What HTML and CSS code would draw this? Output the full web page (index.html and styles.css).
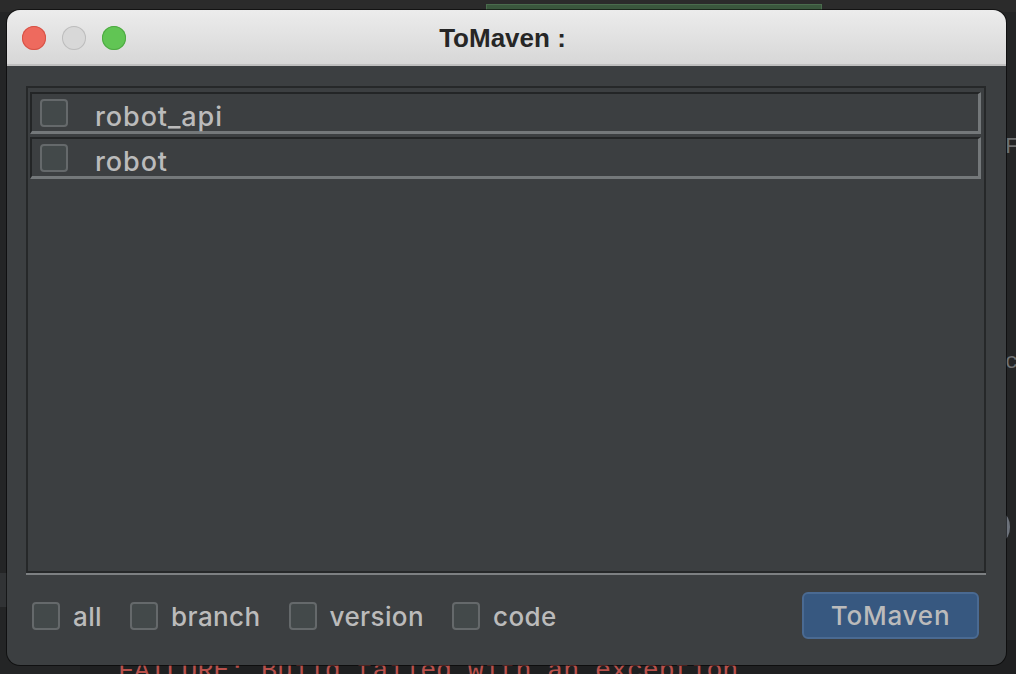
FILE: index.html
```html
<!DOCTYPE html>
<html>
<head>
<meta charset="utf-8">
<title>ToMaven</title>
<link rel="stylesheet" href="styles.css">
</head>
<body>
<div class="desktop">
  <div class="ide-topband"></div>
  <div class="ide-progress"></div>
  <div class="ide-leftband"></div>
  <div class="ide-console"><span class="console-text">FAILURE: Build failed with an exception.</span></div>
  <div class="ide-glyph glyph-f">F</div>
  <div class="ide-glyph glyph-c">c</div>
  <div class="ide-knob"></div>

  <div class="window">
    <div class="titlebar">
      <div class="lights">
        <span class="light red"></span>
        <span class="light gray"></span>
        <span class="light green"></span>
      </div>
      <div class="title">ToMaven :</div>
    </div>
    <div class="content">
      <div class="list">
        <div class="row">
          <span class="box"></span>
          <span class="row-label">robot_api</span>
        </div>
        <div class="row">
          <span class="box"></span>
          <span class="row-label">robot</span>
        </div>
      </div>
      <div class="footer">
        <div class="opts">
          <label class="opt"><span class="box"></span><span class="opt-label">all</span></label>
          <label class="opt"><span class="box"></span><span class="opt-label">branch</span></label>
          <label class="opt"><span class="box"></span><span class="opt-label">version</span></label>
          <label class="opt"><span class="box"></span><span class="opt-label">code</span></label>
        </div>
        <button class="btn">ToMaven</button>
      </div>
    </div>
  </div>
</div>
</body>
</html>
```

FILE: styles.css
```css
* { box-sizing: border-box; }
html, body {
  margin: 0;
  padding: 0;
  width: 1016px;
  height: 674px;
  overflow: hidden;
  background: #2b2b2b;
  font-family: Inter, "Liberation Sans", sans-serif;
}
.desktop {
  position: relative;
  width: 1016px;
  height: 674px;
  background: #242526;
}
.ide-topband {
  position: absolute;
  left: 0; top: 0;
  width: 1016px; height: 12px;
  background: #2b2b2b;
}
.ide-progress {
  position: absolute;
  left: 486px; top: 4px;
  width: 336px; height: 8px;
  background: #3a573d;
  border: 1px solid #4a6c4d;
}
.ide-leftband {
  position: absolute;
  left: 0; top: 573px;
  width: 10px; height: 34px;
  background: #313335;
}
.ide-console {
  position: absolute;
  left: 80px; top: 640px;
  width: 936px; height: 34px;
  background: #1f2021;
}
.console-text {
  position: absolute;
  left: 38px; top: 18px;
  font-family: "Liberation Mono", "DejaVu Sans Mono", monospace;
  font-size: 26.5px;
  line-height: 26px;
  color: #b9514c;
  white-space: nowrap;
}
.ide-glyph {
  position: absolute;
  left: 1005px;
  font-family: "Liberation Mono", monospace;
  font-size: 22px;
  line-height: 22px;
  color: #6f7172;
}
.glyph-f { top: 137px; }
.glyph-c { top: 352px; }
.ide-knob {
  position: absolute;
  left: 996px; top: 514px;
  width: 14px; height: 26px;
  border-radius: 50%;
  background: #6c727b;
}

.window {
  position: absolute;
  left: 7px; top: 10px;
  width: 999px; height: 655px;
  border-radius: 13px;
  overflow: hidden;
  background: #3c3f41;
  box-shadow: 0 0 0 1px rgba(0,0,0,0.55);
  display: flex;
  flex-direction: column;
}
.titlebar {
  position: relative;
  height: 56px;
  flex: none;
  background: linear-gradient(#ececec, #d7d7d7);
  border-bottom: 2px solid #bfbfbf;
  display: flex;
  align-items: center;
  justify-content: center;
}
.lights {
  position: absolute;
  left: 15px; top: 16px;
  display: flex;
  gap: 16px;
}
.light {
  width: 24px; height: 24px;
  border-radius: 50%;
  display: block;
}
.light.red { background: #ee6a5e; box-shadow: inset 0 0 0 1px #d65347; }
.light.gray { background: #d8d8d8; box-shadow: inset 0 0 0 1px #bdbdbd; }
.light.green { background: #61c554; box-shadow: inset 0 0 0 1px #4ea943; }
.title {
  font-family: "Liberation Sans", Arial, sans-serif;
  font-weight: bold;
  font-size: 26px;
  color: #262626;
  margin-right: 8px;
  margin-top: 2px;
}

.content {
  flex: 1;
  display: flex;
  flex-direction: column;
  padding: 20px 20px 0 19px;
}
.list {
  flex: 1;
  border: 2px solid #262829;
  box-shadow: 0 2px 0 #7d8082;
  padding: 4px 3px 0 2px;
  display: flex;
  flex-direction: column;
  gap: 3px;
}
.row {
  height: 42px;
  border-top: 2px solid #232526;
  border-left: 2px solid #232526;
  border-bottom: 3px solid #74787a;
  border-right: 3px solid #74787a;
  display: flex;
  align-items: center;
  padding-left: 8px;
}
.box {
  flex: none;
  width: 28px; height: 28px;
  border: 2px solid #65696b;
  border-radius: 4px;
  background: #43494a;
  display: block;
}
.row-label {
  margin-left: 27px;
  padding-top: 7px;
  font-size: 27px;
  font-weight: 500;
  letter-spacing: 0.9px;
  color: #bbbbbb;
}

.footer {
  flex: none;
  height: 47px;
  margin: 19px 0 26px;
  padding: 0 7px 0 6px;
  display: flex;
  align-items: center;
  justify-content: space-between;
}
.opts {
  display: flex;
  align-items: center;
  gap: 28px;
}
.opt {
  display: flex;
  align-items: center;
  gap: 13px;
}
.opt-label {
  font-size: 26px;
  font-weight: 500;
  letter-spacing: 0.4px;
  color: #bbbbbb;
  padding-top: 2px;
}
.btn {
  width: 177px;
  height: 47px;
  border: 2px solid #4a6a92;
  border-radius: 6px;
  background: #375880;
  color: #bbbbbb;
  font-family: Inter, "Liberation Sans", sans-serif;
  font-size: 26px;
  font-weight: 500;
  letter-spacing: 0.8px;
  padding: 0;
}
```
